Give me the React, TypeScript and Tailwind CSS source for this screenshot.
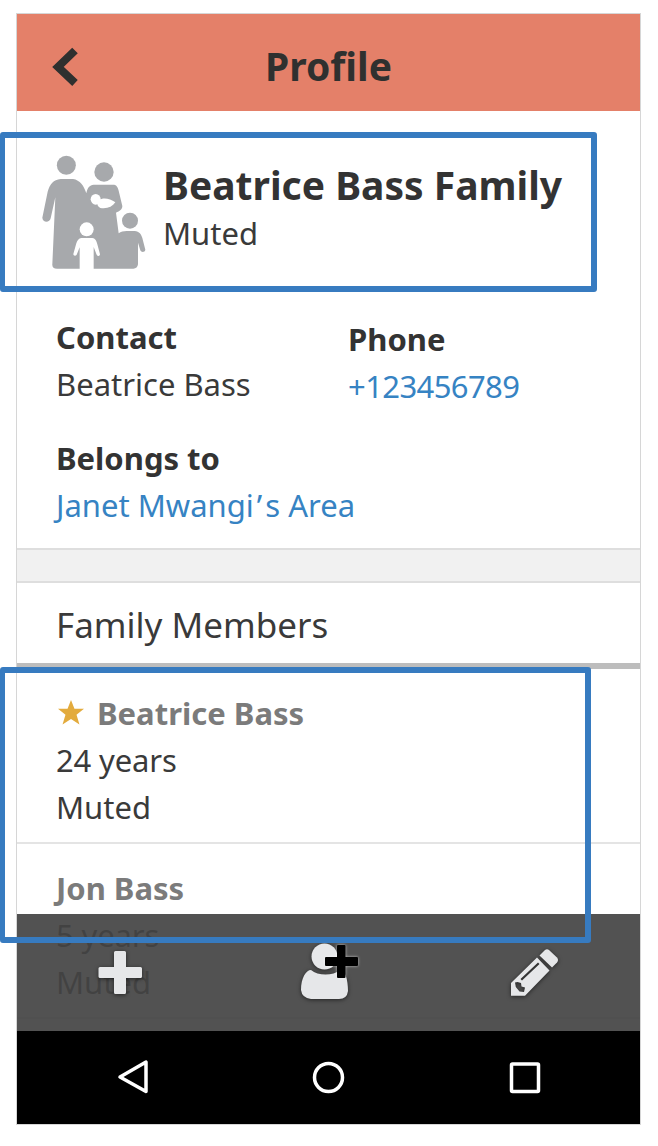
import React from "react";

function FamilyIcon() {
  return (
    <svg viewBox="126 105 312 342" className="h-[114px] w-[104px] shrink-0" fill="#a7a9ac">
      <circle cx="199" cy="136" r="28.5" />
      <circle cx="312" cy="156" r="29" />
      <circle cx="390" cy="302" r="24" />
      <path d="M182 177H219C240 180 252 198 259 220C262 203 269 195 281 194H343C351 196 354 203 356 212L367 258C367 268 359 273 348 278L356 340C362 335 371 333 380 333H404C418 334 424 343 427 354L436 389C435 397 424 398 421 391L414 368V433C413 441 408 446 400 446H171C161 446 156 441 157 432L166 232L152 295C149 309 128 309 127 293L143 215C150 192 160 179 182 177Z" />
      <g fill="#fff">
        <ellipse cx="287" cy="238" rx="15" ry="16" />
        <path d="M296 241C310 231 330 236 346 247C337 261 321 267 301 264C292 260 289 250 296 241Z" />
        <circle cx="260" cy="328" r="21" />
        <path d="M244 354H277C287 356 290 364 292 373L300 403C299 410 293 409 290 404L281 381V447H239V382L230 404C227 409 220 408 220 402L229 370C232 361 236 355 244 354Z" />
      </g>
    </svg>
  );
}

function Star() {
  return (
    <svg viewBox="0 0 24 23" className="mt-[-2px] mr-[13px] ml-[2px] h-[25px] w-[26px] shrink-0" fill="#e3ab3d">
      <path d="M12 0L15.2 8H24L17.1 13.5L19.8 22.5L12 17.4L4.2 22.5L6.9 13.5L0 8H8.8Z" />
    </svg>
  );
}

interface Member {
  name: string;
  age: string;
  primary?: boolean;
}

const members: Member[] = [
  { name: "Beatrice Bass", age: "24 years", primary: true },
  { name: "Jon Bass", age: "5 years" },
];

function MemberRow({ name, age, primary }: Member) {
  return (
    <li className="h-[175px] border-b-2 border-[#e4e4e4] pt-[21px] pl-[39px] leading-[47px]">
      <div className="flex items-center font-bold text-[#7b7b7b]">
        {primary && <Star />}
        <span>{name}</span>
      </div>
      <div className="tracking-[-0.15px]">{age}</div>
      <div>Muted</div>
    </li>
  );
}

function ActionBar() {
  return (
    <div className="absolute inset-x-0 top-[900px] h-[117px] bg-[#434343]/92">
      <svg viewBox="17 914 623 117" className="h-full w-full">
        <g fill="#e6e7e9" style={{ filter: "drop-shadow(0 1px 2px rgba(0,0,0,.55))" }}>
          <path d="M115.500 951H124.500Q126 951 126 952.500V967H140.500Q142 967 142 968.500V976.500Q142 978 140.500 978H126V992.500Q126 994 124.500 994H115.500Q114 994 114 992.500V978H100Q98.500 978 98.500 976.500V968.500Q98.500 967 100 967H114V952.500Q114 951 115.500 951Z" />
          <path d="M311 970C318 976 333 976 340 970C345 970 348 979 348 991Q347 999 339 999H311Q302 998 301 990C301 978 306 970 311 970Z" />
          <circle cx="324.500" cy="956.500" r="13" />
          <path fillRule="evenodd" d="M511 983L537 957.500L549.500 970.500L525 995.800H511ZM515 982.500L515.800 987L519.500 991.500L524 992L525 987.500L521.500 986.500L521 983L517.500 982ZM520.500 979L522 980.500L539.500 964L538 962.500Z" />
          <path d="M539.500 955.500L545 950Q547 948.500 549 950L557 957.500Q559 960 557 962.500L552 967.500Z" />
        </g>
        <path
          d="M338 945H344.500Q345.500 945 345.500 946V957H357Q358 957 358 958V965Q358 966 357 966H345.500V977Q345.500 978 344.500 978H338Q337 978 337 977V966H326Q325 966 325 965V958Q325 957 326 957H337V946Q337 945 338 945Z"
          fill="#000"
          style={{ filter: "drop-shadow(0 0 1.500px rgba(255,255,255,.65))" }}
        />
      </svg>
    </div>
  );
}

function NavBar() {
  return (
    <div className="absolute inset-x-0 bottom-0 h-[93px] bg-black">
      <svg viewBox="17 1031 623 93" className="h-full w-full" fill="none" stroke="#fff" strokeWidth="3.500" strokeLinejoin="round">
        <path d="M120 1077L146 1062V1091.500Z" />
        <circle cx="328.500" cy="1077.500" r="14" />
        <rect x="511.500" y="1064" width="27" height="27.500" rx="1" />
      </svg>
    </div>
  );
}

export default function App() {
  return (
    <div className="relative h-[1146px] w-[658px] overflow-hidden bg-white pt-[13px] pl-4 font-['Noto_Sans','Open_Sans',sans-serif] text-[31px] text-[#3a3a3a]">
      <main className="relative h-[1112px] w-[625px] overflow-hidden border border-[#d6d6d6] bg-white">
        <header className="flex h-[97px] items-center bg-[#e48069] text-[#2f302f]">
          <svg viewBox="0 0 26 40" className="mt-[9px] ml-[35px] h-10 w-[26px]" fill="none" stroke="currentColor" strokeWidth="8">
            <path d="M23 3.500L6 20L23 36" />
          </svg>
          <h1 className="w-[501px] pt-[7px] text-center text-[39px] font-bold">Profile</h1>
        </header>

        <section className="flex h-[190px] pt-[44px] pl-[25px]">
          <FamilyIcon />
          <div className="pl-[17px]">
            <h2 className="text-[39px] leading-[60px] font-bold whitespace-nowrap text-[#333]">Beatrice Bass Family</h2>
            <p className="-mt-[5px] leading-[47px]">Muted</p>
          </div>
        </section>

        <section className="h-[247px] pt-[13px] pl-[39px] leading-[47px]">
          <div className="grid grid-cols-[292px_1fr]">
            <div>
              <h3 className="font-bold text-[#333]">Contact</h3>
              <p>Beatrice Bass</p>
            </div>
            <div className="pt-[2px]">
              <h3 className="font-bold text-[#333]">Phone</h3>
              <p className="tracking-[-0.6px] text-[#3683c3]">+123456789</p>
            </div>
          </div>
          <div className="mt-[25px]">
            <h3 className="font-bold text-[#333]">Belongs to</h3>
            <p className="text-[#3683c3]">
              Janet Mwangi<span className="mx-[3px]">’</span>s Area
            </p>
          </div>
        </section>

        <div className="h-[35px] border-y-2 border-[#dedede] bg-[#f1f1f1]" />
        <h2 className="h-[86px] border-b-[6px] border-[#bdbdbd] pl-[39px] text-[35px] leading-[84px]">Family Members</h2>
        <ul>
          {members.map((m) => (
            <MemberRow key={m.name} {...m} />
          ))}
        </ul>

        <ActionBar />
        <NavBar />
      </main>
      <div className="absolute top-[132px] left-0 h-[160px] w-[597px] rounded-[3px] border-[6px] border-l-[5px] border-[#377bc0]" />
      <div className="absolute top-[667px] left-0 h-[276px] w-[591px] rounded-[3px] border-[6px] border-l-[5px] border-[#377bc0]" />
    </div>
  );
}
